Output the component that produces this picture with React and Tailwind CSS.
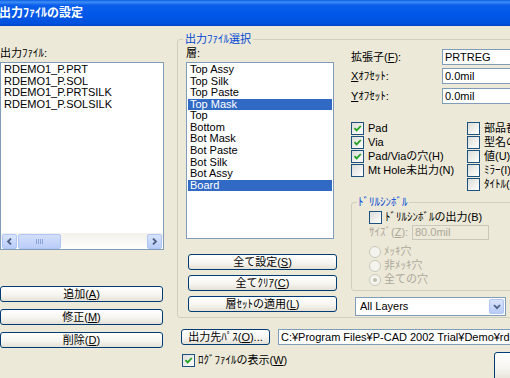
import React from "react";

const U = ({ children }) => <span className="underline underline-offset-[1px]">{children}</span>;

const Btn = ({ className = "", children }) => (
  <div
    className={`h-[16px] shrink-0 rounded-[3px] border border-[#003C74] bg-[linear-gradient(to_bottom,#FFFFFF_0%,#F6F5F0_55%,#E4E1D6_100%)] flex items-center justify-center leading-none whitespace-nowrap ${className}`}
  >
    {children}
  </div>
);

const Check = ({ checked }) => (
  <span className="w-[13px] h-[13px] shrink-0 border border-[#1C5180] bg-[linear-gradient(135deg,#DCDCD7,#FFFFFF)] flex items-center justify-center">
    {checked && (
      <svg width="9" height="9" viewBox="0 0 9 9">
        <path d="M1.5 4.2 L3.6 6.4 L7.8 2" stroke="#21A121" strokeWidth="1.8" fill="none" />
      </svg>
    )}
  </span>
);

const Radio = ({ on }) => (
  <span className="w-[12px] h-[12px] shrink-0 rounded-full border border-[#CAC8BB] bg-[#F4F3EE] flex items-center justify-center">
    {on && <span className="w-[4px] h-[4px] rounded-full bg-[#C0BEB2]" />}
  </span>
);

const Field = ({ className = "", children }) => (
  <div className={`h-[16px] border border-[#7F9DB9] bg-white pl-[2px] leading-[14px] whitespace-nowrap overflow-hidden ${className}`}>
    {children}
  </div>
);

const Arrow = ({ dir }) => (
  <div className="w-[15px] h-[15px] rounded-[2px] border border-[#B1C5F3] bg-[linear-gradient(to_bottom,#D9E4FD,#B8CCF8)] flex items-center justify-center">
    <svg width="7" height="7" viewBox="0 0 7 7">
      <path
        d={dir === "l" ? "M5 0.5 L2 3.5 L5 6.5" : "M2 0.5 L5 3.5 L2 6.5"}
        stroke="#4D6185"
        strokeWidth="1.8"
        fill="none"
      />
    </svg>
  </div>
);

const files = ["RDEMO1_P.PRT", "RDEMO1_P.SOL", "RDEMO1_P.PRTSILK", "RDEMO1_P.SOLSILK"];
const layers = ["Top Assy", "Top Silk", "Top Paste", "Top Mask", "Top", "Bottom", "Bot Mask", "Bot Paste", "Bot Silk", "Bot Assy", "Board"];
const selected = ["Top Mask", "Board"];

export default function App() {
  return (
    <div className="w-[510px] h-[378px] overflow-hidden bg-[#ECE9D8] flex flex-col text-[11px] text-black [font-family:'Liberation_Sans','Noto_Sans_CJK_JP',sans-serif]">
      {/* Title bar */}
      <div className="h-[26px] shrink-0 flex items-center bg-[linear-gradient(to_bottom,#0A5FE6_0%,#3D8EF6_8%,#0A5EEB_20%,#0056E8_60%,#0051DC_90%,#0043C6_100%)]">
        <span className="ml-[-1px] text-white font-bold text-[12px] leading-none">出力ﾌｧｲﾙの設定</span>
      </div>

      <div className="flex">
        {/* Left column */}
        <div className="w-[164px] shrink-0 flex flex-col pt-[20px]">
          <div className="h-[14px] leading-[14px]">出力ﾌｧｲﾙ:</div>
          <div className="mt-[2px] h-[188px] border border-[#7F9DB9] bg-white flex flex-col">
            <div className="flex-1 pt-[1px] pl-[3px]">
              {files.map((f) => (
                <div key={f} className="h-[11.5px] leading-[11.5px]">{f}</div>
              ))}
            </div>
            <div className="h-[16px] flex items-center bg-[linear-gradient(to_bottom,#F3F1EC,#FEFEFB)] px-[1px] gap-[1px]">
              <Arrow dir="l" />
              <div className="w-[43px] h-[15px] rounded-[2px] border border-[#B1C5F3] bg-[linear-gradient(to_bottom,#D3DFFC,#BACDF8)] flex items-center justify-center gap-[1px]">
                <span className="w-[1px] h-[5px] bg-[#8DA4DB]" />
                <span className="w-[1px] h-[5px] bg-[#8DA4DB]" />
                <span className="w-[1px] h-[5px] bg-[#8DA4DB]" />
                <span className="w-[1px] h-[5px] bg-[#8DA4DB]" />
              </div>
              <div className="flex-1" />
              <Arrow dir="r" />
            </div>
          </div>
          <div className="mt-[36px] flex flex-col gap-[7px]">
            <Btn className="w-[163px]">追加(<U>A</U>)</Btn>
            <Btn className="w-[163px]">修正(<U>M</U>)</Btn>
            <Btn className="w-[163px]">削除(<U>D</U>)</Btn>
          </div>
        </div>

        {/* Right area */}
        <div className="ml-[13px] w-[420px] shrink-0 flex flex-col pt-[13px]">
          <div className="relative h-[279px] border border-[#D0D0BF] rounded-[3px] flex pl-[8px]">
            <span className="absolute left-[5px] top-[-7px] px-[2px] bg-[#ECE9D8] text-[#0046D5] leading-[13px]">出力ﾌｧｲﾙ選択</span>

            {/* Layers column */}
            <div className="w-[151px] shrink-0 flex flex-col pt-[6px]">
              <div className="h-[14px] leading-[14px]">層:</div>
              <div className="mt-[2px] w-[148px] h-[177px] border border-[#7F9DB9] bg-white p-[1px]">
                {layers.map((l) => (
                  <div
                    key={l}
                    className={`h-[11.57px] leading-[11.57px] pl-[2px] ${selected.includes(l) ? "bg-[#316AC5] text-white" : ""}`}
                  >
                    {l}
                  </div>
                ))}
              </div>
              <div className="mt-[15px] ml-[2px] flex flex-col gap-[5px]">
                <Btn className="w-[149px]">全て設定(<U>S</U>)</Btn>
                <Btn className="w-[149px]">全てｸﾘｱ(<U>C</U>)</Btn>
                <Btn className="w-[149px]">層ｾｯﾄの適用(<U>L</U>)</Btn>
              </div>
            </div>

            {/* Settings column */}
            <div className="ml-[14px] flex-1 flex flex-col pt-[9px]">
              <div className="flex flex-col gap-[3px]">
                <div className="flex items-center h-[16px]">
                  <span className="w-[91px]">拡張子(<U>F</U>):</span>
                  <Field className="w-[120px]">PRTREG</Field>
                </div>
                <div className="flex items-center h-[16px]">
                  <span className="w-[91px]"><U>X</U>ｵﾌｾｯﾄ:</span>
                  <Field className="w-[120px]">0.0mil</Field>
                </div>
                <div className="flex items-center h-[16px] mt-[1px]">
                  <span className="w-[91px]"><U>Y</U>ｵﾌｾｯﾄ:</span>
                  <Field className="w-[120px]">0.0mil</Field>
                </div>
              </div>

              <div className="mt-[17px] flex">
                <div className="w-[116px] flex flex-col">
                  {[
                    ["Pad", true],
                    ["Via", true],
                    ["Pad/Viaの穴(H)", true],
                    ["Mt Hole未出力(N)", false],
                  ].map(([t, c]) => (
                    <div key={t} className="h-[14px] flex items-center gap-[4px] whitespace-nowrap">
                      <Check checked={c} />
                      <span className="leading-[13px]">{t}</span>
                    </div>
                  ))}
                </div>
                <div className="flex flex-col">
                  {["部品番号(R)", "型名の出力(T)", "値(U)", "ﾐﾗｰ(I)", "ﾀｲﾄﾙ(G)"].map((t) => (
                    <div key={t} className="h-[14px] flex items-center gap-[4px] whitespace-nowrap">
                      <Check />
                      <span className="leading-[13px]">{t}</span>
                    </div>
                  ))}
                </div>
              </div>

              {/* Drill symbol group */}
              <div className="relative mt-[11px] h-[89px] border border-[#D0D0BF] rounded-[3px] pl-[17px] pt-[8px] flex flex-col">
                <span className="absolute left-[5px] top-[-7px] px-[1px] bg-[#ECE9D8] text-[#0046D5] leading-[13px]">ﾄﾞﾘﾙｼﾝﾎﾞﾙ</span>
                <div className="h-[13px] flex items-center gap-[3px] whitespace-nowrap">
                  <Check />
                  <span className="leading-[13px]">ﾄﾞﾘﾙｼﾝﾎﾞﾙの出力(B)</span>
                </div>
                <div className="mt-[1px] flex items-center h-[15px] text-[#ACA899] whitespace-nowrap">
                  <span className="w-[43px]">ｻｲｽﾞ(<U>Z</U>):</span>
                  <div className="w-[77px] h-[15px] border border-[#C9C7BA] bg-[#ECE9D8] pl-[2px] leading-[13px]">80.0mil</div>
                </div>
                <div className="mt-[5px] flex flex-col gap-[1px] text-[#ACA899]">
                  <div className="h-[13px] flex items-center gap-[3px]"><Radio /><span>ﾒｯｷ穴</span></div>
                  <div className="h-[13px] flex items-center gap-[3px]"><Radio /><span>非ﾒｯｷ穴</span></div>
                  <div className="h-[13px] flex items-center gap-[3px]"><Radio on /><span>全ての穴</span></div>
                </div>
              </div>

              <div className="mt-[6px] ml-[4px] w-[151px] h-[19px] border border-[#7F9DB9] bg-white flex items-center">
                <span className="flex-1 pl-[4px]">All Layers</span>
                <div className="w-[15px] h-[15px] mr-[1px] rounded-[2px] border border-[#B1C5F3] bg-[linear-gradient(to_bottom,#D9E4FD,#B8CCF8)] flex items-center justify-center">
                  <svg width="8" height="6" viewBox="0 0 8 6">
                    <path d="M1 1 L4 4.2 L7 1" stroke="#4D6185" strokeWidth="1.8" fill="none" />
                  </svg>
                </div>
              </div>
            </div>
          </div>

          {/* Output path row */}
          <div className="mt-[11px] ml-[4px] flex items-center gap-[8px]">
            <Btn className="w-[89px]">出力先ﾊﾟｽ(<U>O</U>)...</Btn>
            <Field className="w-[300px]">C:¥Program Files¥P-CAD 2002 Trial¥Demo¥rdemo1</Field>
          </div>

          {/* Log row */}
          <div className="mt-[7px] ml-[5px] w-[387px] flex justify-between items-start">
            <div className="mt-[2px] h-[13px] flex items-center gap-[3px]">
              <Check checked />
              <span className="leading-[13px]">ﾛｸﾞﾌｧｲﾙの表示(<U>W</U>)</span>
            </div>
            <div className="w-[75px] h-[30px] rounded-[3px] border border-[#003C74] bg-[linear-gradient(to_bottom,#FFFFFF,#F6F5F0_55%,#E4E1D6)]" />
          </div>
        </div>
      </div>
    </div>
  );
}
